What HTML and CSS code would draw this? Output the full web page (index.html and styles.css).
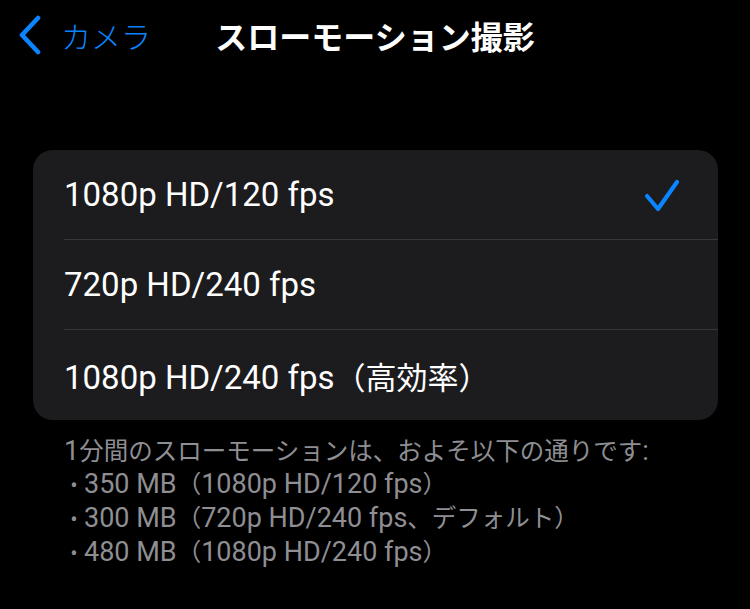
FILE: index.html
```html
<!DOCTYPE html>
<html lang="ja">
<head>
  <meta charset="UTF-8">
  <meta name="viewport" content="width=device-width, initial-scale=1">
  <title>スローモーション撮影</title>
  <link rel="stylesheet" href="styles.css">
</head>
<body>

<div class="navbar">
  <a class="back" href="#">
    <svg class="chevron" width="26" height="40" viewBox="0 0 26 40">
      <path d="M22 3 L6 20 L22 37" fill="none" stroke="#0a84ff" stroke-width="4.6" stroke-linecap="round" stroke-linejoin="round"/>
    </svg>
    <span>カメラ</span>
  </a>
  <h1 class="title">スローモーション撮影</h1>
</div>

<div class="lista">
  <div class="item">
    <span class="rotulo">1080p HD/120 fps</span>
    <svg class="check" width="36" height="34" viewBox="0 0 36 34">
      <path d="M3 18 L14 31 L33 4" fill="none" stroke="#0a84ff" stroke-width="4.2" stroke-linecap="round" stroke-linejoin="round"/>
    </svg>
  </div>
  <div class="item">
    <span class="rotulo">720p HD/240 fps</span>
  </div>
  <div class="item">
    <span class="rotulo">1080p HD/240 fps<span class="jp">（高効率）</span></span>
  </div>
</div>

<!-- tamanhos aproximados por minuto -->
<div class="nota">
  <p>1<span class="jp">分間のスローモーションは、およそ以下の通りです</span>:</p>
  <p><span class="dot">•</span>350 MB<span class="jp">（</span>1080p HD/120 fps<span class="jp">）</span></p>
  <p><span class="dot">•</span>300 MB<span class="jp">（</span>720p HD/240 fps<span class="jp">、デフォルト）</span></p>
  <p><span class="dot">•</span>480 MB<span class="jp">（</span>1080p HD/240 fps<span class="jp">）</span></p>
</div>

</body>
</html>
```

FILE: styles.css
```css
body {
  margin: 0;
  background-color: #000000;
  color: #ffffff;
  font-family: Roboto, "Noto Sans CJK JP", sans-serif;
}

.navbar {
  position: relative;
  height: 70px;
  display: flex;
  align-items: center;
  justify-content: center;
}

.back {
  position: absolute;
  left: 16px;
  top: 0;
  bottom: 0;
  display: flex;
  align-items: center;
  gap: 19px;
  color: #0a84ff;
  text-decoration: none;
  font-family: "Noto Sans CJK JP", sans-serif;
  font-size: 30px;
  font-weight: 300;
}

.title {
  margin: 0;
  font-family: "Noto Sans CJK JP", sans-serif;
  font-size: 32px;
  font-weight: bold;
}

.lista {
  margin: 80px 32px 0 33px;
  background-color: #1c1c1e;
  border-radius: 20px;
  overflow: hidden;
}

.item {
  height: 89px;
  margin-left: 31px;
  padding-right: 38px;
  display: flex;
  align-items: center;
  justify-content: space-between;
  border-bottom: 1px solid #38383a;
  font-size: 33px;
}

.item:last-child {
  border-bottom: none;
  height: 90px;
}

.item .jp {
  font-size: 31px;
}

.check {
  margin-top: 1px;
}

.nota {
  margin: 15px 30px 0 64px;
  color: #8e8e93;
  font-size: 27px;
  line-height: 33px;
}

.nota p {
  margin: 0;
}

.nota .jp {
  font-size: 24.5px;
}

.nota .dot {
  display: inline-block;
  width: 20px;
  font-size: 22px;
  text-align: center;
}
```
